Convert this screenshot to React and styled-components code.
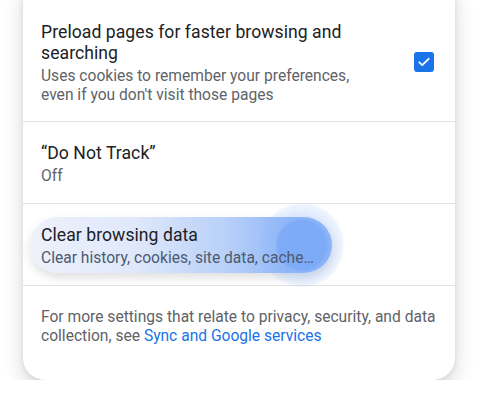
import React from 'react';
import styled, { createGlobalStyle } from 'styled-components';

const GlobalStyle = createGlobalStyle`
  html, body {
    margin: 0;
    padding: 0;
    background: #ffffff;
    overflow: hidden;
  }
  body {
    font-family: Roboto, "Noto Sans", Arial, sans-serif;
    -webkit-font-smoothing: antialiased;
  }
`;

const Page = styled.div`
  width: 480px;
  height: 404px;
  padding: 0 25px 0 23px;
  box-sizing: border-box;
`;

const Card = styled.div`
  margin-top: -24px;
  padding-top: 24px;
  background: #ffffff;
  border-radius: 22px;
  box-shadow: 0 9px 20px rgba(0, 0, 0, 0.16), 0 1px 5px rgba(0, 0, 0, 0.08);
  overflow: hidden;
`;

const Row = styled.div`
  display: flex;
  gap: 24px;
  height: ${({ $height }) => $height}px;
  box-sizing: border-box;
  padding: ${({ $pad }) => $pad} 21px 0 18px;
  align-items: ${({ $align }) => $align || 'flex-start'};
  border-bottom: 1px solid #e3e3e3;
`;

const Text = styled.div`
  flex: 1;
  max-width: 330px;
  display: flex;
  flex-direction: column;
`;

const Title = styled.div`
  font-size: 17.6px;
  line-height: 21px;
  letter-spacing: 0.05px;
  color: #202124;
`;

const Subtitle = styled.div`
  margin-top: 3px;
  font-size: 15.6px;
  line-height: 19px;
  color: #5f6368;
`;

const Checkbox = styled.div`
  width: 20px;
  height: 20px;
  margin: 30px 0 0 auto;
  border-radius: 3px;
  background: #1a73e8;
  display: flex;
  align-items: center;
  justify-content: center;
  flex-shrink: 0;
`;

const Pill = styled.div`
  position: relative;
  display: flex;
  flex-direction: column;
  width: 302px;
  height: 56px;
  box-sizing: border-box;
  margin-left: -11px;
  padding: 8px 0 0 11px;
  border-radius: 28px;
  background: linear-gradient(90deg, #eef1fa 0%, #dfe8fb 35%, #b7cff8 66%, #8fb6f7 86%, #8ab4f8 100%);
  box-shadow: 0 5px 10px rgba(60, 64, 67, 0.16);

  ${Subtitle} {
    color: #4d5a70;
  }
`;

const Ripple = styled.span`
  position: absolute;
  right: -13px;
  top: 50%;
  width: 86px;
  height: 86px;
  margin-top: -43px;
  border-radius: 50%;
  background: radial-gradient(
    circle,
    rgba(122, 168, 246, 0.8) 0%,
    rgba(122, 168, 246, 0.8) 24px,
    rgba(138, 180, 248, 0.32) 27px,
    rgba(138, 180, 248, 0.15) 40px,
    rgba(138, 180, 248, 0) 43px
  );
  pointer-events: none;
`;

const PillText = styled.div`
  position: relative;
  display: flex;
  flex-direction: column;
`;

const Footer = styled.div`
  padding: 22px 8px 34px 18px;
  font-size: 15.6px;
  line-height: 19px;
  color: #5f6368;
`;

const Link = styled.a`
  color: #1a73e8;
  text-decoration: none;
`;

const CheckIcon = () => (
  <svg width="14" height="14" viewBox="0 0 24 24" fill="none">
    <path d="M4 12.5l5 5L20 6.5" stroke="#ffffff" strokeWidth="3" strokeLinecap="round" strokeLinejoin="round" />
  </svg>
);

const App = () => (
  <Page>
    <GlobalStyle />
    <Card>
      <Row $height={122} $pad="22px">
        <Text>
          <Title>Preload pages for faster browsing and searching</Title>
          <Subtitle>Uses cookies to remember your preferences, even if you don't visit those pages</Subtitle>
        </Text>
        <Checkbox>
          <CheckIcon />
        </Checkbox>
      </Row>
      <Row $height={82} $pad="21px">
        <Text>
          <Title>“Do Not Track”</Title>
          <Subtitle>Off</Subtitle>
        </Text>
      </Row>
      <Row $height={82} $pad="0px" $align="center">
        <Pill>
          <Ripple />
          <PillText>
            <Title>Clear browsing data</Title>
            <Subtitle>Clear history, cookies, site data, cache…</Subtitle>
          </PillText>
        </Pill>
      </Row>
      <Footer>
        For more settings that relate to privacy, security, and data collection, see{' '}
        <Link href="#">Sync and Google services</Link>
      </Footer>
    </Card>
  </Page>
);

export default App;
